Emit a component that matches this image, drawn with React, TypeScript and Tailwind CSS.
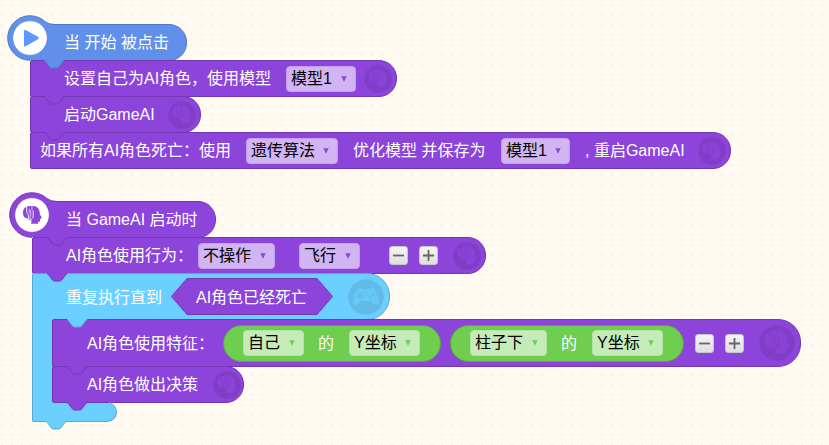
import type { ReactNode } from "react";

type Tone = "purple" | "blue" | "sky";

const fills: Record<Tone, string> = { purple: "#8d44db", blue: "#6190ea", sky: "#6bcfff" };
const edges: Record<Tone, string> = { purple: "#7437b4", blue: "#5079c5", sky: "#57a9d1" };

function Head({ color, gap }: { color: string; gap: string }) {
  return (
    <>
      <path
        fill={color}
        d="M38 9C51 9 59 17 59.5 31L60 35L66 44L61 47L60.5 53Q60 57 56 56.5L54 56V62H33V52H25Q24 46 20 46Q9 43 9 29C9 17 17 10 26 10Q30 8 34 9Z"
      />
      <g fill="none" stroke={gap} strokeWidth="2.6">
        <path d="M20 9V28Q20 32 25 34V53" />
        <path d="M28 17V31" strokeWidth="1.8" />
        <path d="M36 8V19L32 23V39L29.5 42V53" strokeWidth="2" />
        <path d="M39.5 22V43L33 49V60" />
      </g>
    </>
  );
}

function Watermark({ big = false, pad = false, className = "" }: { big?: boolean; pad?: boolean; className?: string }) {
  const ring = pad ? "#61bbe6" : "#803dc6";
  return (
    <svg viewBox="0 0 36 36" className={`shrink-0 ${big ? "size-9" : "size-7"} ${className}`}>
      <circle cx="18" cy="18" r="17.7" fill={ring} />
      {pad ? (
        <g fill="#67c7f6">
          <path d="M9.5 9.5Q13 8 15 10H21Q23 8 26.5 9.5Q29.5 14 30.8 21Q31.5 26 28.5 26.5Q27 26.5 23.2 22H12.8Q9 26.5 7.5 26.5Q4.5 26 5.2 21Q6.5 14 9.5 9.5Z" />
          <path d="M9 17H15M12 14V20" stroke={ring} strokeWidth="1.6" />
          <circle cx="22" cy="18" r="1.2" fill={ring} />
          <circle cx="25.5" cy="15.5" r="1.2" fill={ring} />
        </g>
      ) : (
        <g transform="translate(2.2 2) scale(.43)">
          <Head color="#8b43d7" gap={ring} />
        </g>
      )}
    </svg>
  );
}

function Notch({ tone, className }: { tone: Tone; className: string }) {
  return (
    <svg viewBox="0 0 22 10" className={`absolute h-[10px] w-[22px] overflow-visible ${className}`}>
      <path d="M0 -1V.5L1 1L5.5 7Q6.2 8 7.5 8H12.8Q14 8 14.7 7L19.2 1L20.2 .5V-1Z" fill={fills[tone]} />
      <path d="M0 .5L1 1L5.5 7Q6.2 8 7.5 8H12.8Q14 8 14.7 7L19.2 1L20.2 .5" fill="none" stroke={edges[tone]} />
    </svg>
  );
}

function Row({ tone = "purple", notch, notchX = "left-[13px]", className, children }: {
  tone?: Tone; notch?: Tone; notchX?: string; className: string; children: ReactNode;
}) {
  const skin = {
    purple: "bg-[#8d44db] border-[#7437b4]",
    blue: "bg-[#6190ea] border-[#5079c5]",
    sky: "bg-[#6bcfff] border-[#57a9d1]",
  }[tone];
  return (
    <div className={`relative flex items-center rounded-l-[2px] border text-white ${skin} ${className}`}>
      {notch && <Notch tone={notch} className={`-top-[1px] ${notchX}`} />}
      {children}
    </div>
  );
}

function Label({ className, children }: { className: string; children: ReactNode }) {
  return <span className={`shrink-0 whitespace-pre ${className}`}>{children}</span>;
}

function Drop({ green = false, className, children }: { green?: boolean; className: string; children: ReactNode }) {
  const skin = green ? "bg-[#c5ebb8] border-[#b3e4a2] text-[#6fcd50]" : "bg-[#d1b4f1] border-[#c3a0ed] text-[#8d44db]";
  return (
    <div className={`flex h-[26px] shrink-0 items-center justify-between rounded-[4px] border pr-[8px] pl-1 ${skin} ${className}`}>
      <span className="whitespace-nowrap text-black">{children}</span>
      <svg viewBox="0 0 6 6" className="size-[6px] fill-current"><path d="M.3 .3H5.7L3 5.7Z" /></svg>
    </div>
  );
}

function Step({ plus = false, className }: { plus?: boolean; className: string }) {
  return (
    <div className={`flex size-[19px] shrink-0 items-center justify-center rounded-[3px] border border-[#c9c5cd] bg-linear-to-b from-[#f4f4f4] to-[#dfdfdf] ${className}`}>
      <svg viewBox="0 0 11 11" className="size-[11px]" stroke="#666" strokeWidth="1.8">
        <path d={plus ? "M0 5.5H11M5.5 0V11" : "M0 5.5H11"} />
      </svg>
    </div>
  );
}

function Hat({ tone, className, icon, children }: { tone: Tone; className: string; icon: ReactNode; children: ReactNode }) {
  return (
    <Row tone={tone} className={`h-[37px] rounded-r-[18px] ${className}`}>
      <svg viewBox="0 0 54 48" className="absolute -top-[10px] -left-[24px] h-12 w-[54px]">
        <path d="M23 45.3A22.3 22.3 0 1 1 38.2 6.7Q42 9.5 48 9.5V44H23Z" fill={fills[tone]} />
        <path d="M23 45.3A22.3 22.3 0 1 1 38.2 6.7Q42 9.5 48 9.5" fill="none" stroke={edges[tone]} />
        <circle cx="23" cy="23" r="17.2" fill="#fff" stroke={edges[tone]} strokeWidth=".5" />
        {icon}
      </svg>
      <Label className="relative ml-[33px]">{children}</Label>
    </Row>
  );
}

function Reporter({ className, children }: { className: string; children: ReactNode }) {
  return (
    <div className={`flex h-[37px] shrink-0 items-center rounded-full border border-[#59a440] bg-[#6fcd50] ${className}`}>
      {children}
    </div>
  );
}

function StartScript() {
  return (
    <section className="absolute top-[24px] left-[30px] flex flex-col items-start">
      <Hat
        tone="blue"
        className="w-[157px]"
        icon={<path d="M17 16Q17 14.4 18.5 15.1L31 21.7Q32.6 23 31 24.3L18.5 31.2Q17 32 17 30.4Z" fill="#5e98ff" />}
      >
        当 开始 被点击
      </Hat>
      <Row notch="blue" className="-mt-px h-[37px] w-[367px] rounded-r-[18px]">
        <Label className="ml-[33px] w-[222px]">设置自己为AI角色，使用模型</Label>
        <Drop className="w-[70px]">模型1</Drop>
        <Watermark className="ml-2" />
      </Row>
      <Row notch="purple" className="-mt-px h-[37px] w-[171px] rounded-r-[18px]">
        <Label className="ml-[33px] w-[104px]">启动GameAI</Label>
        <Watermark />
      </Row>
      <Row notch="purple" className="-mt-px h-[37px] w-[701px] rounded-r-[18px]">
        <Label className="ml-[9px] w-[206px]">如果所有AI角色死亡：使用</Label>
        <Drop className="w-[92px]">遗传算法</Drop>
        <Label className="ml-[15px] w-[148px]">优化模型 并保存为</Label>
        <Drop className="w-[69px]">模型1</Drop>
        <Label className="ml-[15px] w-[113px]">, 重启GameAI</Label>
        <Watermark />
      </Row>
    </section>
  );
}

function GameScript() {
  return (
    <section className="absolute top-[201px] left-[32px] flex flex-col items-start">
      <Hat
        tone="purple"
        className="w-[184px]"
        icon={<g transform="translate(11 11) scale(.333)"><Head color="#8d44db" gap="#fff" /></g>}
      >
        当 GameAI 启动时
      </Hat>
      <Row notch="purple" notchX="left-[14px]" className="-mt-px h-[37px] w-[454px] rounded-r-[18px]">
        <Label className="ml-[33px] w-[132px]">AI角色使用行为：</Label>
        <Drop className="w-[77px]">不操作</Drop>
        <Drop className="ml-6 w-[61px]">飞行</Drop>
        <Step className="ml-[29px]" />
        <Step plus className="ml-[11px]" />
        <Watermark className="ml-[15px]" />
      </Row>
      <div className="relative -mt-px flex flex-col items-start">
        <Row tone="sky" notch="purple" notchX="left-[14px]" className="h-[47px] w-[358px] rounded-r-[23px]">
          <Label className="ml-[33px] w-[105px] pt-0.5">重复执行直到</Label>
          <div className="relative flex h-[37px] w-[162px] shrink-0 items-center">
            <svg viewBox="0 0 162 37" className="absolute inset-0 h-[37px] w-[162px]">
              <path d="M16 .5H146L161.5 18.5L146 36.5H16L.5 18.5Z" fill="#8d44db" stroke="#7437b4" />
            </svg>
            <span className="relative ml-[25px] pt-0.5 whitespace-nowrap">AI角色已经死亡</span>
          </div>
          <Watermark big pad className="ml-[15px]" />
        </Row>
        <div className="relative -mt-px flex">
          <div className="-mt-px w-[21px] border-l border-[#57a9d1] bg-[#6bcfff]" />
          <div className="-ml-px flex flex-col items-start">
            <Row notch="sky" notchX="left-[14px]" className="h-[48px] w-[749px] rounded-r-[23px]">
              <Label className="ml-[34px] w-[136px] pt-px">AI角色使用特征：</Label>
              <Reporter className="w-[218px]">
                <Drop green className="ml-[19px] w-[61px]">自己</Drop>
                <Label className="ml-[14px] w-[31px] pt-px">的</Label>
                <Drop green className="w-[71px]">Y坐标</Drop>
              </Reporter>
              <Reporter className="ml-[9px] w-[234px]">
                <Drop green className="ml-[19px] w-[77px]">柱子下</Drop>
                <Label className="ml-[14px] w-[31px] pt-px">的</Label>
                <Drop green className="w-[71px]">Y坐标</Drop>
              </Reporter>
              <Step className="ml-[11px]" />
              <Step plus className="ml-[11px]" />
              <Watermark big className="ml-[15px]" />
            </Row>
            <Row notch="purple" notchX="left-[14px]" className="-mt-px h-[37px] w-[192px] rounded-r-[18px]">
              <Label className="ml-[34px] w-[126px]">AI角色做出决策</Label>
              <Watermark />
            </Row>
          </div>
        </div>
        <div className="relative -mt-px h-[20px] w-[85px] rounded-r-[10px] rounded-bl-[2px] border border-t-0 border-[#57a9d1] bg-[#6bcfff]">
          <div className="absolute top-0 left-[20px] h-px w-[56px] bg-[#7437b4]" />
          <Notch tone="purple" className="top-0 left-[34px]" />
          <Notch tone="sky" className="top-[19px] left-[13px]" />
        </div>
      </div>
    </section>
  );
}

export default function App() {
  return (
    <main className="relative h-[445px] w-[829px] overflow-hidden bg-[#fffbf3] bg-[linear-gradient(#fffbf3_8px,transparent_8px),linear-gradient(90deg,#fffbf3_8px,#f5f0df_8px)] bg-size-[10px_10px] bg-position-[3px_6px] font-['Liberation_Sans','Noto_Sans_CJK_SC',sans-serif] text-[16px] leading-6">
      <StartScript />
      <GameScript />
    </main>
  );
}
